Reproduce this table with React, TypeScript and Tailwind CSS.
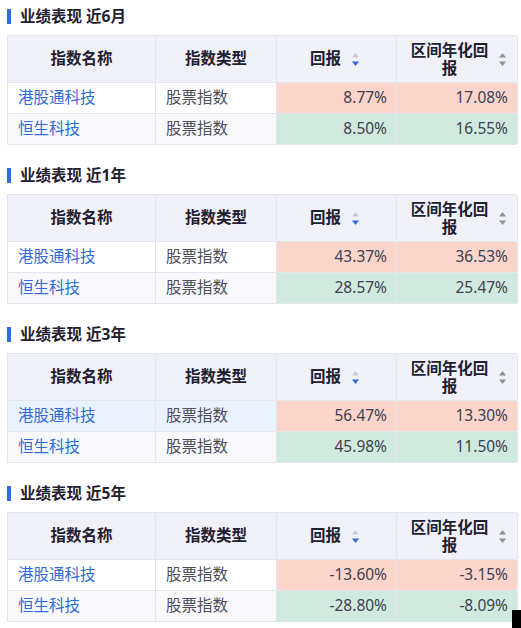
import React from "react";

type Row = { name: string; type: string; ret: string; ann: string };
type Section = { title: string; rows: Row[]; hoverFirst?: boolean };

const sections: Section[] = [
  {
    title: "业绩表现 近6月",
    rows: [
      { name: "港股通科技", type: "股票指数", ret: "8.77%", ann: "17.08%" },
      { name: "恒生科技", type: "股票指数", ret: "8.50%", ann: "16.55%" },
    ],
  },
  {
    title: "业绩表现 近1年",
    rows: [
      { name: "港股通科技", type: "股票指数", ret: "43.37%", ann: "36.53%" },
      { name: "恒生科技", type: "股票指数", ret: "28.57%", ann: "25.47%" },
    ],
  },
  {
    title: "业绩表现 近3年",
    hoverFirst: true,
    rows: [
      { name: "港股通科技", type: "股票指数", ret: "56.47%", ann: "13.30%" },
      { name: "恒生科技", type: "股票指数", ret: "45.98%", ann: "11.50%" },
    ],
  },
  {
    title: "业绩表现 近5年",
    rows: [
      { name: "港股通科技", type: "股票指数", ret: "-13.60%", ann: "-3.15%" },
      { name: "恒生科技", type: "股票指数", ret: "-28.80%", ann: "-8.09%" },
    ],
  },
];

function SortIcon({ active }: { active: boolean }) {
  const up = active ? "#c9cbd9" : "#8e8ea6";
  const down = active ? "#2f6be0" : "#8e8ea6";
  return (
    <svg width="7" height="13" viewBox="0 0 7 13" className="shrink-0">
      <polygon points="3.5,0 7,4.5 0,4.5" fill={up} />
      <polygon points="0,8.5 7,8.5 3.5,13" fill={down} />
    </svg>
  );
}

function Table({ s }: { s: Section }) {
  return (
    <div className="w-[510px] border-t border-l border-[#e4e6ef]">
      <div className="grid grid-cols-[148px_121px_120px_121px] h-[47px] bg-[#f0f1f9] border-b border-[#e4e6ef] font-bold text-[#1f2030]">
        <div className="flex items-center justify-center border-r border-[#e4e6ef]">指数名称</div>
        <div className="flex items-center justify-center border-r border-[#e4e6ef]">指数类型</div>
        <div className="flex items-center justify-center gap-[11px] border-r border-[#e4e6ef] pr-[4px]">
          <span>回报</span>
          <SortIcon active />
        </div>
        <div className="flex items-center justify-center gap-[10px] border-r border-[#e4e6ef] pl-[2px]">
          <span className="w-[78px] text-center leading-[18px]">区间年化回报</span>
          <SortIcon active={false} />
        </div>
      </div>
      {s.rows.map((r, i) => {
        const base =
          i === 0 ? (s.hoverFirst ? "bg-[#eaf2fe]" : "bg-white") : "bg-[#f9f9fc]";
        const val = i === 0 ? "bg-[#fbd5cc]" : "bg-[#d0eadf]";
        return (
          <div
            key={i}
            className="grid grid-cols-[148px_121px_120px_121px] h-[31px] border-b border-[#e4e6ef]"
          >
            <div className={`${base} flex items-center pl-[10px] border-r border-[#e4e6ef] text-[#2f6bdc]`}>
              {r.name}
            </div>
            <div className={`${base} flex items-center pl-[10px] border-r border-[#e4e6ef] text-[#4d4d5c]`}>
              {r.type}
            </div>
            <div className={`${val} flex items-center justify-end pr-[9px] border-r border-[#e4e6ef] text-[#3f3f4f]`}>
              {r.ret}
            </div>
            <div className={`${val} flex items-center justify-end pr-[9px] border-r border-[#e4e6ef] text-[#3f3f4f]`}>
              {r.ann}
            </div>
          </div>
        );
      })}
    </div>
  );
}

export default function App() {
  return (
    <div
      className="relative w-[521px] h-[628px] bg-white overflow-hidden pl-[7px] pt-[6px] text-[15.5px]"
      style={{ fontFamily: '"Noto Sans", "Noto Sans CJK SC", sans-serif' }}
    >
      <div className="flex flex-col gap-[20px]">
        {sections.map((s, i) => (
          <div key={i} className="flex flex-col gap-[9px]">
            <div className="flex items-center h-[20px]">
              <div className="w-[4px] h-[15px] bg-[#2f6be0]" />
              <div className="ml-[9px] font-bold text-[15.5px] text-[#1f2030] leading-[20px]">
                {s.title}
              </div>
            </div>
            <Table s={s} />
          </div>
        ))}
      </div>
      <div className="absolute left-[512px] top-[610px] w-[9px] h-[18px] bg-black" />
    </div>
  );
}
